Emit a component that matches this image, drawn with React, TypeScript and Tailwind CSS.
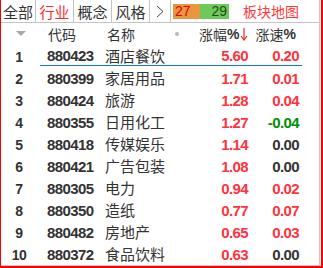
import React from 'react';

type Row = {
  code: string;
  name: string;
  change: string;
  speed: string;
  speedColor?: string;
};

const rows: Row[] = [
  { code: '880423', name: '酒店餐饮', change: '5.60', speed: '0.20' },
  { code: '880399', name: '家居用品', change: '1.71', speed: '0.01' },
  { code: '880424', name: '旅游', change: '1.28', speed: '0.04' },
  { code: '880355', name: '日用化工', change: '1.27', speed: '-0.04', speedColor: 'text-[#008f00]' },
  { code: '880418', name: '传媒娱乐', change: '1.14', speed: '0.00', speedColor: 'text-[#333333]' },
  { code: '880421', name: '广告包装', change: '1.08', speed: '0.00', speedColor: 'text-[#333333]' },
  { code: '880305', name: '电力', change: '0.94', speed: '0.02' },
  { code: '880350', name: '造纸', change: '0.77', speed: '0.07' },
  { code: '880482', name: '房地产', change: '0.65', speed: '0.03' },
  { code: '880372', name: '食品饮料', change: '0.63', speed: '0.00', speedColor: 'text-[#333333]' },
];

const cjk = "font-['Noto_Sans_CJK_SC',sans-serif]";
const num = "font-['Liberation_Sans',Arial,sans-serif] font-bold";

export default function App() {
  return (
    <div className="w-[323px] h-[268px] bg-white border-l border-l-[#ff0000] border-r-2 border-r-[#ff0000] border-b-2 border-b-[#ff0000] overflow-hidden">
      <div className="h-[266px] border-r border-r-[#c8c8c8] border-b border-b-[#c8c8c8] mr-[1px] text-[#333333]">
        {/* Tab bar */}
        <div className={`flex items-center h-[23px] border-b border-[#c4c4c4] text-[15px] leading-none ${cjk}`}>
          <div className="w-[35px] h-full flex items-center justify-center border-r border-[#c4c4c4]">全部</div>
          <div className="w-[38px] h-full flex items-center justify-center border-r border-[#c4c4c4] text-[#ff2a2a]">行业</div>
          <div className="w-[38px] h-full flex items-center justify-center border-r border-[#c4c4c4]">概念</div>
          <div className="w-[38px] h-full flex items-center justify-center border-r border-[#c4c4c4]">风格</div>
          <div className="w-[21px] h-full flex items-center justify-center border-r border-[#c4c4c4]">
            <svg width="8" height="13" viewBox="0 0 8 13" fill="none">
              <path d="M1 1 L7 6.5 L1 12" stroke="#444" strokeWidth="1" />
            </svg>
          </div>
          <div className="ml-[2px] flex h-[15px] w-[56px] text-[14px] font-['Liberation_Sans',Arial,sans-serif]">
            <div className="w-[27px] bg-[#e9963c] text-[#d8001a] flex items-center pl-[2px]">27</div>
            <div className="w-[29px] bg-[#6cc95c] text-[#1f4d12] flex items-center justify-end pr-[2px]">29</div>
          </div>
          <div className="ml-[14px] text-[14px] text-[#ff3a3a]">板块地图</div>
        </div>

        {/* Header */}
        <div className={`flex items-center h-[22px] text-[14px] leading-none ${cjk}`}>
          <div className="w-[40px] flex justify-center pr-[1px]">
            <svg width="10" height="6" viewBox="0 0 10 6">
              <path d="M0 0 H10 L5 5 Z" fill="#a8a8a8" />
            </svg>
          </div>
          <div className="ml-[7px] w-[59px]">代码</div>
          <div className="w-[68px]">名称</div>
          <div className="w-[6px] flex items-center">
            <span className="block w-[4px] h-[4px] rounded-full bg-[#b8b8b8]" />
          </div>
          <div className="ml-[18px] flex items-center">
            涨幅<span className={`${num} text-[14px]`}>%</span>
            <svg width="8" height="14" viewBox="0 0 8 14" className="ml-[1px]">
              <path d="M4 1 V12" stroke="#ff2020" strokeWidth="1.2" />
              <path d="M1 9 L4 13 L7 9" stroke="#ff2020" strokeWidth="1.2" fill="none" />
            </svg>
          </div>
          <div className="ml-[7px] flex items-center">
            涨速<span className={`${num} text-[14px]`}>%</span>
          </div>
        </div>

        {/* Rows */}
        {rows.map((r, i) => (
          <div key={r.code} className="flex h-[22px]">
            <div className={`w-[36px] h-[21px] pt-[3px] flex items-center justify-center text-[14px] tracking-[-0.5px] ${num}`}>
              {i + 1}
            </div>
            <div
              className={`ml-[3px] w-[262px] h-[21px] flex items-center ${
                i === 0 ? 'border-b border-[#0a78d4]' : ''
              }`}
            >
              <div className={`ml-[7px] w-[58px] pt-[3px] text-[15px] tracking-[-0.6px] ${num}`}>{r.code}</div>
              <div className={`w-[76px] text-[15px] leading-none ${cjk}`}>{r.name}</div>
              <div className={`w-[67px] pt-[3px] text-right text-[15px] tracking-[-0.6px] text-[#ff3340] ${num}`}>
                {r.change}
              </div>
              <div
                className={`w-[51px] pt-[3px] text-right text-[15px] tracking-[-0.6px] ${num} ${
                  r.speedColor ?? 'text-[#ff3340]'
                }`}
              >
                {r.speed}
              </div>
            </div>
          </div>
        ))}
      </div>
    </div>
  );
}
